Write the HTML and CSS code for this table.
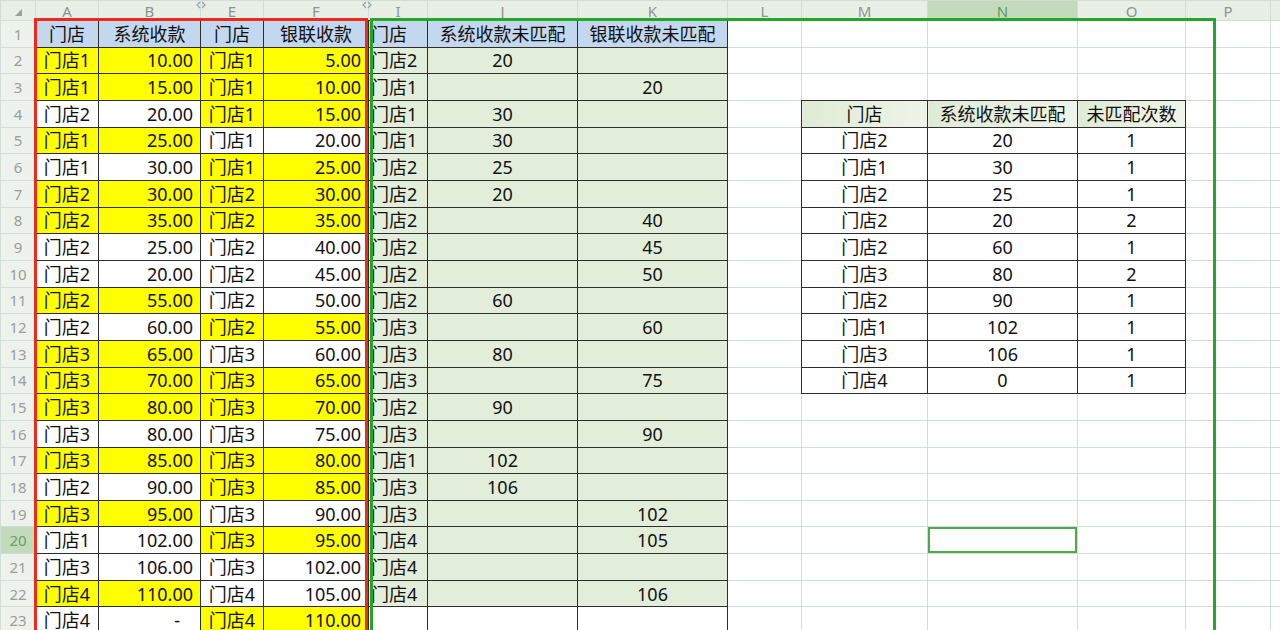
FILE: index.html
```html
<!DOCTYPE html>
<html lang="zh-CN">
<head>
<meta charset="utf-8">
<title>Sheet</title>
<link rel="stylesheet" href="styles.css">
</head>
<body>
<div class="sheet">
<table class="grid">
<colgroup>
<col class="w-rh"><col class="w-a"><col class="w-b"><col class="w-e"><col class="w-f"><col class="w-i"><col class="w-j"><col class="w-k"><col class="w-l"><col class="w-m"><col class="w-n"><col class="w-o"><col class="w-p"><col class="w-q">
</colgroup>
<thead>
<tr class="hdr">
<th class="corner"><span class="tri"></span></th><th>A</th><th>B</th><th>E</th><th>F</th><th>I</th><th>J</th><th>K</th><th>L</th><th>M</th><th class="sel">N</th><th>O</th><th>P</th><th></th>
</tr>
</thead>
<tbody>
<tr><th>1</th><td class="t b c">门店</td><td class="t b c">系统收款</td><td class="t b c">门店</td><td class="t b c">银联收款</td><td class="t b l">门店</td><td class="t b c">系统收款未匹配</td><td class="t b c">银联收款未匹配</td><td></td><td></td><td></td><td></td><td></td><td></td></tr>
<tr><th>2</th><td class="t y c">门店1</td><td class="t y r">10.00</td><td class="t y c">门店1</td><td class="t y r">5.00</td><td class="t g l">门店2</td><td class="t g c">20</td><td class="t g c"></td><td></td><td></td><td></td><td></td><td></td><td></td></tr>
<tr><th>3</th><td class="t y c">门店1</td><td class="t y r">15.00</td><td class="t y c">门店1</td><td class="t y r">10.00</td><td class="t g l">门店1</td><td class="t g c"></td><td class="t g c">20</td><td></td><td></td><td></td><td></td><td></td><td></td></tr>
<tr><th>4</th><td class="t c">门店2</td><td class="t r">20.00</td><td class="t y c">门店1</td><td class="t y r">15.00</td><td class="t g l">门店1</td><td class="t g c">30</td><td class="t g c"></td><td></td><td class="t h c">门店</td><td class="t h c">系统收款未匹配</td><td class="t h c">未匹配次数</td><td></td><td></td></tr>
<tr><th>5</th><td class="t y c">门店1</td><td class="t y r">25.00</td><td class="t c">门店1</td><td class="t r">20.00</td><td class="t g l">门店1</td><td class="t g c">30</td><td class="t g c"></td><td></td><td class="t c">门店2</td><td class="t c">20</td><td class="t c">1</td><td></td><td></td></tr>
<tr><th>6</th><td class="t c">门店1</td><td class="t r">30.00</td><td class="t y c">门店1</td><td class="t y r">25.00</td><td class="t g l">门店2</td><td class="t g c">25</td><td class="t g c"></td><td></td><td class="t c">门店1</td><td class="t c">30</td><td class="t c">1</td><td></td><td></td></tr>
<tr><th>7</th><td class="t y c">门店2</td><td class="t y r">30.00</td><td class="t y c">门店2</td><td class="t y r">30.00</td><td class="t g l">门店2</td><td class="t g c">20</td><td class="t g c"></td><td></td><td class="t c">门店2</td><td class="t c">25</td><td class="t c">1</td><td></td><td></td></tr>
<tr><th>8</th><td class="t y c">门店2</td><td class="t y r">35.00</td><td class="t y c">门店2</td><td class="t y r">35.00</td><td class="t g l">门店2</td><td class="t g c"></td><td class="t g c">40</td><td></td><td class="t c">门店2</td><td class="t c">20</td><td class="t c">2</td><td></td><td></td></tr>
<tr><th>9</th><td class="t c">门店2</td><td class="t r">25.00</td><td class="t c">门店2</td><td class="t r">40.00</td><td class="t g l">门店2</td><td class="t g c"></td><td class="t g c">45</td><td></td><td class="t c">门店2</td><td class="t c">60</td><td class="t c">1</td><td></td><td></td></tr>
<tr><th>10</th><td class="t c">门店2</td><td class="t r">20.00</td><td class="t c">门店2</td><td class="t r">45.00</td><td class="t g l">门店2</td><td class="t g c"></td><td class="t g c">50</td><td></td><td class="t c">门店3</td><td class="t c">80</td><td class="t c">2</td><td></td><td></td></tr>
<tr><th>11</th><td class="t y c">门店2</td><td class="t y r">55.00</td><td class="t c">门店2</td><td class="t r">50.00</td><td class="t g l">门店2</td><td class="t g c">60</td><td class="t g c"></td><td></td><td class="t c">门店2</td><td class="t c">90</td><td class="t c">1</td><td></td><td></td></tr>
<tr><th>12</th><td class="t c">门店2</td><td class="t r">60.00</td><td class="t y c">门店2</td><td class="t y r">55.00</td><td class="t g l">门店3</td><td class="t g c"></td><td class="t g c">60</td><td></td><td class="t c">门店1</td><td class="t c">102</td><td class="t c">1</td><td></td><td></td></tr>
<tr><th>13</th><td class="t y c">门店3</td><td class="t y r">65.00</td><td class="t c">门店3</td><td class="t r">60.00</td><td class="t g l">门店3</td><td class="t g c">80</td><td class="t g c"></td><td></td><td class="t c">门店3</td><td class="t c">106</td><td class="t c">1</td><td></td><td></td></tr>
<tr><th>14</th><td class="t y c">门店3</td><td class="t y r">70.00</td><td class="t y c">门店3</td><td class="t y r">65.00</td><td class="t g l">门店3</td><td class="t g c"></td><td class="t g c">75</td><td></td><td class="t c">门店4</td><td class="t c">0</td><td class="t c">1</td><td></td><td></td></tr>
<tr><th>15</th><td class="t y c">门店3</td><td class="t y r">80.00</td><td class="t y c">门店3</td><td class="t y r">70.00</td><td class="t g l">门店2</td><td class="t g c">90</td><td class="t g c"></td><td></td><td></td><td></td><td></td><td></td><td></td></tr>
<tr><th>16</th><td class="t c">门店3</td><td class="t r">80.00</td><td class="t c">门店3</td><td class="t r">75.00</td><td class="t g l">门店3</td><td class="t g c"></td><td class="t g c">90</td><td></td><td></td><td></td><td></td><td></td><td></td></tr>
<tr><th>17</th><td class="t y c">门店3</td><td class="t y r">85.00</td><td class="t y c">门店3</td><td class="t y r">80.00</td><td class="t g l">门店1</td><td class="t g c">102</td><td class="t g c"></td><td></td><td></td><td></td><td></td><td></td><td></td></tr>
<tr><th>18</th><td class="t c">门店2</td><td class="t r">90.00</td><td class="t y c">门店3</td><td class="t y r">85.00</td><td class="t g l">门店3</td><td class="t g c">106</td><td class="t g c"></td><td></td><td></td><td></td><td></td><td></td><td></td></tr>
<tr><th>19</th><td class="t y c">门店3</td><td class="t y r">95.00</td><td class="t c">门店3</td><td class="t r">90.00</td><td class="t g l">门店3</td><td class="t g c"></td><td class="t g c">102</td><td></td><td></td><td></td><td></td><td></td><td></td></tr>
<tr><th class="sel">20</th><td class="t c">门店1</td><td class="t r">102.00</td><td class="t y c">门店3</td><td class="t y r">95.00</td><td class="t g l">门店4</td><td class="t g c"></td><td class="t g c">105</td><td></td><td></td><td class="active"></td><td></td><td></td><td></td></tr>
<tr><th>21</th><td class="t c">门店3</td><td class="t r">106.00</td><td class="t c">门店3</td><td class="t r">102.00</td><td class="t g l">门店4</td><td class="t g c"></td><td class="t g c"></td><td></td><td></td><td></td><td></td><td></td><td></td></tr>
<tr><th>22</th><td class="t y c">门店4</td><td class="t y r">110.00</td><td class="t c">门店4</td><td class="t r">105.00</td><td class="t g l">门店4</td><td class="t g c"></td><td class="t g c">106</td><td></td><td></td><td></td><td></td><td></td><td></td></tr>
<tr><th>23</th><td class="t c">门店4</td><td class="t r dash">-</td><td class="t y c">门店4</td><td class="t y r">110.00</td><td class="t l"></td><td class="t c"></td><td class="t c"></td><td></td><td></td><td></td><td></td><td></td><td></td></tr>
</tbody>
</table>

<div class="range range-red"></div>
<div class="range range-green"></div>
<svg class="hidemark hm1" width="10" height="8" viewBox="0 0 10 8"><path d="M4 1 L1 4 L4 7 M6 1 L9 4 L6 7" fill="none" stroke="#8fa0b8" stroke-width="1.2"/></svg>
<svg class="hidemark hm2" width="10" height="8" viewBox="0 0 10 8"><path d="M4 1 L1 4 L4 7 M6 1 L9 4 L6 7" fill="none" stroke="#8fa0b8" stroke-width="1.2"/></svg>
</div>
</body>
</html>
```

FILE: styles.css
```css
html, body {
  margin: 0;
  padding: 0;
  background: #ffffff;
}
body {
  width: 1280px;
  height: 630px;
  overflow: hidden;
}
.sheet {
  position: relative;
  width: 1280px;
  height: 630px;
  overflow: hidden;
}
.grid {
  border-collapse: collapse;
  table-layout: fixed;
  width: 1280px;
  font-family: "Noto Sans", "Noto Sans CJK SC", sans-serif;
  font-size: 18px;
  color: #111111;
}
.w-rh { width: 35px; }
.w-a { width: 63px; }
.w-b { width: 102px; }
.w-e { width: 63px; }
.w-f { width: 105px; }
.w-i { width: 59px; }
.w-j { width: 150px; }
.w-k { width: 150px; }
.w-l { width: 74px; }
.w-m { width: 126px; }
.w-n { width: 150px; }
.w-o { width: 108px; }
.w-p { width: 85px; }
.w-q { width: 10px; }

.grid td, .grid th {
  padding: 0;
  border: 1px solid #d2ddd5;
  line-height: 20px;
  white-space: nowrap;
  overflow: hidden;
}
.grid tbody tr {
  height: 26.667px;
}
.grid thead tr {
  height: 20px;
}
.grid thead th {
  background: #e8efe6;
  color: #8e948e;
  font-family: "Noto Sans", sans-serif;
  font-weight: 400;
  font-size: 15px;
  line-height: 18px;
  text-align: center;
  border-color: #d5ddd3;
}
.grid thead th.sel {
  background: #c3dbbd;
  color: #5f9a5c;
}
.grid .corner {
  position: relative;
}
.tri {
  position: absolute;
  left: 14px;
  top: 8px;
  width: 0;
  height: 0;
  border-left: 7px solid transparent;
  border-bottom: 7px solid #9aa09a;
}
.grid tbody th {
  background: #edf2ec;
  color: #9a9e9a;
  font-family: "Noto Sans", sans-serif;
  font-weight: 400;
  font-size: 15px;
  text-align: center;
}
.grid tbody th.sel {
  background: #c3dbbd;
  color: #6aa066;
}

.grid td.t {
  border: 1px double #2e2e2e;
}
.c { text-align: center; }
.r { text-align: right; padding-right: 7px !important; }
.l { text-align: left; padding-left: 2px !important; }
.dash { padding-right: 20px !important; }
.y { background: #ffff00; }
.b { background: #c3d7ee; }
.g { background: #e2eeda; }
.h { background: linear-gradient(90deg, #dfebd6, #eef4e9); }

.grid td.active {
  position: relative;
  box-shadow: inset 0 0 0 2px #4ea84e;
}
.grid td.active::after {
  content: "";
  position: absolute;
  right: -3px;
  bottom: -3px;
  width: 5px;
  height: 5px;
  background: #4ea84e;
}

.range {
  position: absolute;
  top: 18px;
  height: 640px;
  box-sizing: border-box;
  pointer-events: none;
}
.range-red {
  left: 34px;
  width: 334px;
  border: 3px solid #ec2b1d;
}
.range-green {
  left: 370px;
  width: 846px;
  border: 3px solid #24a626;
}
.hidemark {
  position: absolute;
  top: 1px;
}
.hm1 { left: 196px; }
.hm2 { left: 362px; }
```
